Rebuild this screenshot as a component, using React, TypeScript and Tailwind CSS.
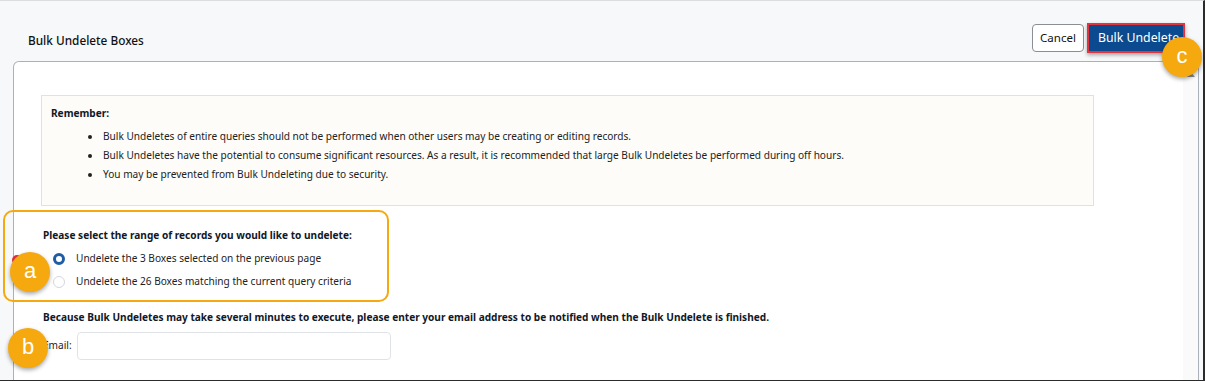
import React from "react";

function Badge({ letter, className }: { letter: string; className: string }) {
  return (
    <div
      className={
        "absolute w-[40px] h-[40px] rounded-full bg-[#f5a90f] text-white flex items-center justify-center text-[22px] leading-none shadow-[0_2px_4px_rgba(0,0,0,0.35)] font-['Liberation_Sans',sans-serif] " +
        className
      }
    >
      <span className="-mt-[2px]">{letter}</span>
    </div>
  );
}

const bullets = [
  "Bulk Undeletes of entire queries should not be performed when other users may be creating or editing records.",
  "Bulk Undeletes have the potential to consume significant resources. As a result, it is recommended that large Bulk Undeletes be performed during off hours.",
  "You may be prevented from Bulk Undeleting due to security.",
];

export default function App() {
  return (
    <div className="relative w-[1205px] h-[381px] overflow-hidden bg-[#f7f8fa] border-t border-t-[#dcdde1] border-r-2 border-r-[#2b2b2b] border-b border-b-[#2b2b2b] font-['Noto_Sans',sans-serif] text-[#111827] flex flex-col">
      <header className="h-[60px] flex items-start justify-between pl-[28px] pr-[18px] shrink-0">
        <h1 className="text-[11.8px] font-medium text-[#111] mt-[31px]">Bulk Undelete Boxes</h1>
        <div className="flex items-center gap-[3px] mt-[22px]">
          <button className="h-[28px] w-[52px] rounded-[4px] border border-[#8a8f96] bg-white text-[11.5px] text-[#111]">
            Cancel
          </button>
          <button className="h-[30px] w-[98px] pl-[9px] text-left whitespace-nowrap overflow-hidden border-2 border-[#e2343e] bg-[#0b4a8e] text-white text-[12.3px] shadow-[0_2px_4px_rgba(0,0,0,0.35)]">
            Bulk Undelete
          </button>
        </div>
      </header>

      <div className="flex-1 ml-[13px] mr-[4px] bg-white border-t border-l border-r border-[#aab1b9] rounded-tl-[6px] flex min-h-0">
        <div className="flex-1 pl-[27px] pt-[33px] text-[10.1px]">
          <div className="w-[1053px] h-[111px] bg-[#fdfcf8] border border-[#e1e1e1] pl-[9px] pt-[10px]">
            <div className="font-bold leading-[14px]">Remember:</div>
            <ul className="mt-[7px] leading-[19px] text-[#222]">
              {bullets.map((b) => (
                <li key={b} className="flex items-center">
                  <span className="ml-[37px] w-[4px] h-[4px] rounded-full bg-[#222] shrink-0" />
                  <span className="ml-[11px]">{b}</span>
                </li>
              ))}
            </ul>
          </div>

          <div className="pl-[2px] pt-[22px]">
            <div className="font-bold leading-[14px]">Please select the range of records you would like to undelete:</div>
            <div className="mt-[10px] flex flex-col gap-[9px] pl-[10px]">
              <label className="flex items-center gap-[11px] h-[14px]">
                <span className="w-[12px] h-[12px] rounded-full border-[3.5px] border-[#1e5ca6] bg-white" />
                <span className="text-[#222]">Undelete the 3 Boxes selected on the previous page</span>
              </label>
              <label className="flex items-center gap-[11px] h-[14px]">
                <span className="w-[12px] h-[12px] rounded-full border border-[#d4d7db] bg-white" />
                <span className="text-[#222]">Undelete the 26 Boxes matching the current query criteria</span>
              </label>
            </div>
            <div className="mt-[21px] font-bold leading-[14px]">
              Because Bulk Undeletes may take several minutes to execute, please enter your email address to be notified when the Bulk Undelete is finished.
            </div>
            <div className="mt-[8px] flex items-center gap-[5px]">
              <span className="text-[#222]">Email:</span>
              <input className="w-[314px] h-[28px] border border-[#dfe3e8] rounded-[4px] bg-white outline-none" />
            </div>
          </div>
        </div>
        <div className="w-[15px] bg-[#fafafa] flex justify-center pt-[10px]">
          <div className="w-0 h-0 border-l-[4px] border-r-[4px] border-b-[5px] border-l-transparent border-r-transparent border-b-[#8e8e8e]" />
        </div>
      </div>

      {/* annotations */}
      <div className="absolute left-[3px] top-[209px] w-[386px] h-[92px] border-2 border-[#f5a90f] rounded-[10px]" />
      <div className="absolute left-[12px] top-[254px] w-[10px] h-[10px] rounded-full bg-[#e2343e]" />
      <Badge letter="a" className="left-[10px] top-[251px]" />
      <Badge letter="b" className="left-[8px] top-[327px]" />
      <Badge letter="c" className="left-[1162px] top-[36px]" />
    </div>
  );
}
